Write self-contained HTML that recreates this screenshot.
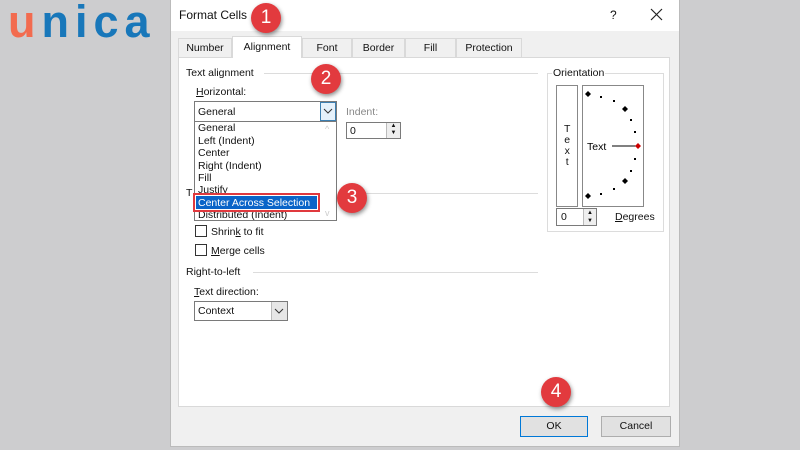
<!DOCTYPE html>
<html><head><meta charset="utf-8"><style>
*{margin:0;padding:0;box-sizing:border-box}
body{width:800px;height:450px;background:#cdcdcf;position:relative;overflow:hidden;font-family:"Liberation Sans",sans-serif;font-size:10.5px;color:#111}
.a{position:absolute}
.t{position:absolute;white-space:nowrap;line-height:12px}
.circ{position:absolute;width:30px;height:30px;border-radius:50%;background:#e23a3e;color:#fff;font-size:19px;text-align:center;line-height:30px;box-shadow:1px 2px 4px rgba(0,0,0,.45)}
.ln{position:absolute;height:1px;background:#dcdcdc}
.cb{position:absolute;width:12px;height:12px;border:1px solid #333;background:#fff}
.tab{position:absolute;top:38px;height:19px;border:1px solid #d9d9d9;border-bottom:none;background:#f0f0f0;text-align:center;line-height:18px}
u{text-decoration:underline}
</style></head><body>
<div class="t" style="left:8px;top:-1px;font-size:45px;font-weight:bold;line-height:45px;letter-spacing:6px"><span style="color:#f26b4f">u</span><span style="color:#1877ba">nica</span></div>
<!-- dialog -->
<div class="a" style="left:170px;top:0;width:510px;height:447px;background:#f0f0f0;border:1px solid #bbb"></div>
<div class="a" style="left:171px;top:0;width:508px;height:31px;background:#fff"></div>
<div class="t" style="left:179px;top:9px;font-size:12px">Format Cells</div>
<div class="t" style="left:610px;top:9px;font-size:12px">?</div>
<svg class="a" style="left:650px;top:8px" width="13" height="13"><path d="M1 1L12 12M12 1L1 12" stroke="#222" stroke-width="1.2"/></svg>
<!-- tabs -->
<div class="tab" style="left:178px;width:54px">Number</div>
<div class="tab" style="left:302px;width:50px">Font</div>
<div class="tab" style="left:352px;width:53px">Border</div>
<div class="tab" style="left:405px;width:51px">Fill</div>
<div class="tab" style="left:456px;width:66px">Protection</div>
<div class="a" style="left:178px;top:57px;width:492px;height:350px;background:#fff;border:1px solid #d9d9d9"></div>
<div class="tab" style="left:232px;width:70px;top:36px;height:22px;background:#fff;line-height:20px">Alignment</div>
<!-- text alignment -->
<div class="t" style="left:186px;top:67px">Text alignment</div>
<div class="ln" style="left:264px;top:73px;width:274px"></div>
<div class="t" style="left:196px;top:86px"><u>H</u>orizontal:</div>
<div class="a" style="left:194px;top:101px;width:143px;height:21px;border:1px solid #7a7a7a;background:#fff"></div>
<div class="t" style="left:198px;top:106px">General</div>
<div class="a" style="left:320px;top:102px;width:16px;height:19px;border:1px solid #3c7fb1;background:#e5f1fb"></div>
<svg class="a" style="left:323px;top:107px" width="10" height="8"><path d="M1 2L5 6L9 2" fill="none" stroke="#333"/></svg>
<div class="a" style="left:194px;top:121px;width:143px;height:100px;border:1px solid #7a7a7a;background:#fff"></div>
<div class="t" style="left:198px;top:122px">General</div>
<div class="t" style="left:198px;top:135px">Left (Indent)</div>
<div class="t" style="left:198px;top:147px">Center</div>
<div class="t" style="left:198px;top:160px">Right (Indent)</div>
<div class="t" style="left:198px;top:172px">Fill</div>
<div class="t" style="left:198px;top:184px">Justify</div>
<div class="t" style="left:198px;top:209px">Distributed (Indent)</div>
<div class="t" style="left:325px;top:123px;color:#ccc;font-size:9px">^</div>
<div class="t" style="left:325px;top:207px;color:#ccc;font-size:9px">v</div>
<div class="a" style="left:193px;top:193px;width:127px;height:19px;border:2px solid #e0393e;background:#fff"></div>
<div class="a" style="left:196px;top:196px;width:121px;height:13px;background:#0a64c8"></div>
<div class="t" style="left:198px;top:197px;color:#fff">Center Across Selection</div>
<div class="t" style="left:346px;top:106px;color:#888">Indent:</div>
<div class="a" style="left:346px;top:122px;width:55px;height:17px;border:1px solid #7a7a7a;background:#fff"></div>
<div class="t" style="left:350px;top:125px">0</div>
<div class="a" style="left:386px;top:123px;width:14px;height:15px;background:#eee;border-left:1px solid #bbb;font-size:6px;line-height:7px;text-align:center">▲<br>▼</div>
<!-- text control -->
<div class="t" style="left:186px;top:187px">T</div>
<div class="ln" style="left:338px;top:193px;width:200px"></div>
<div class="cb" style="left:195px;top:225px"></div>
<div class="t" style="left:211px;top:226px">Shrin<u>k</u> to fit</div>
<div class="cb" style="left:195px;top:244px"></div>
<div class="t" style="left:211px;top:245px"><u>M</u>erge cells</div>
<div class="t" style="left:186px;top:266px">Right-to-left</div>
<div class="ln" style="left:253px;top:272px;width:285px"></div>
<div class="t" style="left:194px;top:286px"><u>T</u>ext direction:</div>
<div class="a" style="left:194px;top:301px;width:94px;height:20px;border:1px solid #7a7a7a;background:#fff"></div>
<div class="t" style="left:198px;top:305px">Context</div>
<div class="a" style="left:271px;top:302px;width:16px;height:18px;background:#e6e6e6;border-left:1px solid #bbb"></div>
<svg class="a" style="left:274px;top:307px" width="10" height="8"><path d="M1 2L5 6L9 2" fill="none" stroke="#333"/></svg>
<!-- orientation -->
<div class="a" style="left:547px;top:73px;width:117px;height:159px;border:1px solid #dcdcdc"></div>
<div class="t" style="left:552px;top:67px;background:#fff;padding:0 1px">Orientation</div>
<div class="a" style="left:556px;top:85px;width:22px;height:122px;border:1px solid #888"></div>
<div class="t" style="left:564px;top:124px;line-height:11px;text-align:center">T<br>e<br>x<br>t</div>
<div class="a" style="left:582px;top:85px;width:62px;height:122px;border:1px solid #888"></div>
<svg class="a" style="left:582px;top:85px" width="62" height="122">
<g fill="#000"><path d="M6 6l3 3-3 3-3-3z"/><path d="M43 21l3 3-3 3-3-3z"/><path d="M43 93l3 3-3 3-3-3z"/><path d="M6 108l3 3-3 3-3-3z"/>
<rect x="18" y="11" width="2" height="2"/><rect x="31" y="15" width="2" height="2"/><rect x="48" y="34" width="2" height="2"/><rect x="52" y="46" width="2" height="2"/><rect x="52" y="73" width="2" height="2"/><rect x="48" y="85" width="2" height="2"/><rect x="31" y="103" width="2" height="2"/><rect x="18" y="108" width="2" height="2"/></g>
<line x1="30" y1="61" x2="54" y2="61" stroke="#000"/><path d="M56 58l3 3-3 3-3-3z" fill="#c00"/>
<text x="5" y="65" font-size="10.5" font-family="Liberation Sans">Text</text></svg>
<div class="a" style="left:556px;top:208px;width:41px;height:18px;border:1px solid #7a7a7a;background:#fff"></div>
<div class="t" style="left:561px;top:211px">0</div>
<div class="a" style="left:583px;top:209px;width:13px;height:16px;background:#eee;border-left:1px solid #bbb;font-size:6px;line-height:8px;text-align:center">▲<br>▼</div>
<div class="t" style="left:615px;top:211px"><u>D</u>egrees</div>
<!-- buttons -->
<div class="a" style="left:520px;top:416px;width:68px;height:21px;border:1px solid #0078d7;background:#e1e1e1;text-align:center;line-height:19px">OK</div>
<div class="a" style="left:601px;top:416px;width:70px;height:21px;border:1px solid #adadad;background:#e1e1e1;text-align:center;line-height:19px">Cancel</div>
<!-- circles -->
<div class="circ" style="left:251px;top:3px">1</div>
<div class="circ" style="left:311px;top:64px">2</div>
<div class="circ" style="left:337px;top:183px">3</div>
<div class="circ" style="left:541px;top:377px">4</div>
</body></html>
